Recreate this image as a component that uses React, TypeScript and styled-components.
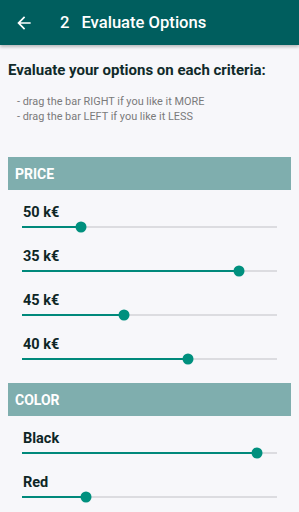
import React from 'react';
import styled, { createGlobalStyle } from 'styled-components';

const GlobalStyle = createGlobalStyle`
  html, body {
    margin: 0;
    padding: 0;
    background: #f7f7fa;
    font-family: Roboto, 'Liberation Sans', sans-serif;
  }
`;

const Page = styled.div`
  width: 299px;
  min-height: 512px;
  background: #f7f7fa;
  overflow: hidden;
`;

const TopBar = styled.header`
  height: 45px;
  background: #005e5e;
  display: flex;
  align-items: center;
  color: #ffffff;
  box-shadow: 0 2px 3px rgba(0, 0, 0, 0.25);
`;

const BackButton = styled.div`
  width: 20px;
  height: 20px;
  margin-left: 14px;
  display: flex;
`;

const Step = styled.span`
  margin-left: 26px;
  font-size: 16.6px;
  font-weight: 500;
`;

const BarTitle = styled.span`
  margin-left: 12px;
  font-size: 16.6px;
  font-weight: 500;
`;

const Intro = styled.section`
  padding: 15px 8px 0;
`;

const Heading = styled.h1`
  margin: 0;
  font-size: 15px;
  line-height: 20px;
  font-weight: 700;
  color: #102a2a;
`;

const Hints = styled.ul`
  list-style: none;
  margin: 14px 0 0;
  padding: 0 0 0 9px;
  font-size: 10.9px;
  line-height: 15px;
  color: #7a7a7a;
`;

const Criterion = styled.section<{ $gap: number }>`
  margin: ${(p) => p.$gap}px 8px 0;
`;

const CriterionHead = styled.div`
  height: 33px;
  background: #7faeae;
  color: #ffffff;
  font-size: 14px;
  font-weight: 700;
  display: flex;
  align-items: center;
  padding-left: 7px;
`;

const OptionRow = styled.div`
  padding: 13px 14px 3px;
  height: 28px;
`;

const OptionLabel = styled.div`
  font-size: 14.5px;
  line-height: 20px;
  font-weight: 700;
  color: #0e2626;
  padding-left: 1px;
`;

const Track = styled.div`
  position: relative;
  height: 8px;
  display: flex;
  align-items: center;
`;

const Rail = styled.div`
  flex: 1;
  height: 2px;
  background: #dcdce0;
  position: relative;
`;

const Fill = styled.div`
  height: 2px;
  background: #00897b;
`;

const Thumb = styled.div`
  position: absolute;
  top: 50%;
  width: 11px;
  height: 11px;
  border-radius: 50%;
  background: #00907e;
  transform: translate(-50%, -50%);
`;

type Option = { label: string; value: number };

const criteria: { name: string; gap: number; options: Option[] }[] = [
  {
    name: 'PRICE',
    gap: 33,
    options: [
      { label: '50 k€', value: 0.23 },
      { label: '35 k€', value: 0.85 },
      { label: '45 k€', value: 0.4 },
      { label: '40 k€', value: 0.652 },
    ],
  },
  {
    name: 'COLOR',
    gap: 17,
    options: [
      { label: 'Black', value: 0.92 },
      { label: 'Red', value: 0.25 },
    ],
  },
];

function ArrowBack() {
  return (
    <svg width="20" height="20" viewBox="0 0 24 24" fill="#ffffff">
      <path d="M20 11H7.83l5.59-5.59L12 4l-8 8 8 8 1.41-1.41L7.83 13H20v-2z" />
    </svg>
  );
}

function App() {
  return (
    <Page>
      <GlobalStyle />
      <TopBar>
        <BackButton>
          <ArrowBack />
        </BackButton>
        <Step>2</Step>
        <BarTitle>Evaluate Options</BarTitle>
      </TopBar>
      <Intro>
        <Heading>Evaluate your options on each criteria:</Heading>
        <Hints>
          <li>- drag the bar RIGHT if you like it MORE</li>
          <li>- drag the bar LEFT if you like it LESS</li>
        </Hints>
      </Intro>
      {criteria.map((c) => (
        <Criterion key={c.name} $gap={c.gap}>
          <CriterionHead>{c.name}</CriterionHead>
          {c.options.map((o) => (
            <OptionRow key={o.label}>
              <OptionLabel>{o.label}</OptionLabel>
              <Track>
                <Rail>
                  <Fill style={{ width: `${o.value * 100}%` }} />
                  <Thumb style={{ left: `${o.value * 100}%` }} />
                </Rail>
              </Track>
            </OptionRow>
          ))}
        </Criterion>
      ))}
    </Page>
  );
}

export default App;
